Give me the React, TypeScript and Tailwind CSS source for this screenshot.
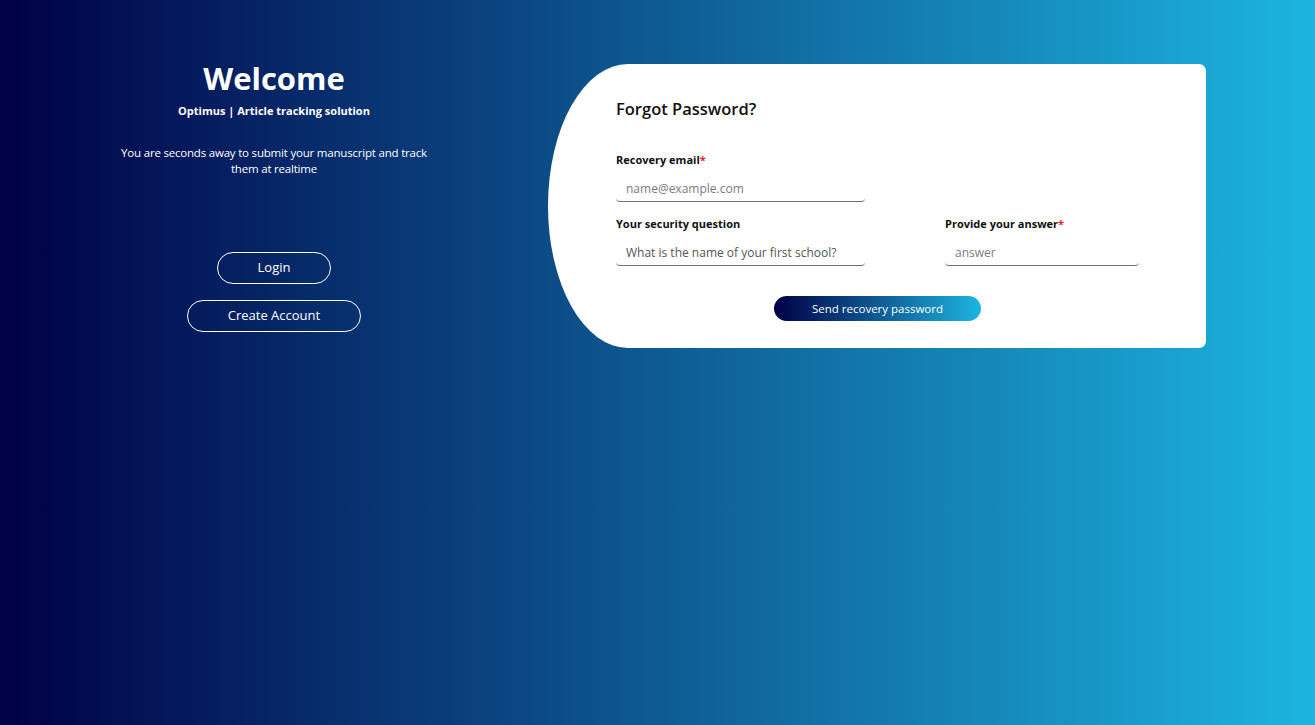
import { useState } from "react";

function Field({
  label,
  required,
  placeholder,
  value,
  width,
}: {
  label: string;
  required?: boolean;
  placeholder?: string;
  value?: string;
  width: string;
}) {
  const [text, setText] = useState(value ?? "");
  return (
    <div className="flex flex-col">
      <label className="text-[11px] font-bold text-[#111] leading-[14px]">
        {label}
        {required && <span className="text-[#e3262f]">*</span>}
      </label>
      <input
        className={`${width} mt-[8px] h-[27px] px-[10px] text-[12px] text-[#555] placeholder:text-[#7b7b7b] outline-none rounded-[4px] border-b-[1.5px] border-[#6f6f6f] bg-white`}
        placeholder={placeholder}
        value={text}
        onChange={(e) => setText(e.target.value)}
      />
    </div>
  );
}

export default function App() {
  return (
    <div
      className="w-screen h-screen flex bg-[linear-gradient(to_right,#000046,#1cb5e0)] text-white"
      style={{ fontFamily: '"Open Sans", "Noto Sans", sans-serif' }}
    >
      {/* left intro */}
      <div className="w-[548px] shrink-0 flex flex-col items-center pt-[58px]">
        <h1 className="text-[31px] font-bold leading-[40px]">Welcome</h1>
        <p className="text-[11px] font-bold mt-[5px]">Optimus | Article tracking solution</p>
        <p className="text-[11.5px] text-center leading-[16px] w-[330px] mt-[25px] tracking-[-0.2px]">
          You are seconds away to submit your manuscript and track them at realtime
        </p>
        <button className="mt-[75px] w-[114px] h-[32px] rounded-full border-[1.5px] border-white text-[13px]">
          Login
        </button>
        <button className="mt-[16px] w-[174px] h-[32px] rounded-full border-[1.5px] border-white text-[13px]">
          Create Account
        </button>
      </div>

      {/* form card */}
      <div className="pt-[64px]">
        <div className="w-[658px] h-[284px] bg-white text-[#111] rounded-tl-[80px_142px] rounded-bl-[80px_142px] rounded-tr-[7px] rounded-br-[7px] pl-[68px] pr-[60px] pt-[34px]">
          <h2 className="text-[16.5px] font-semibold leading-[22px]">Forgot Password?</h2>
          <div className="mt-[33px]">
            <Field label="Recovery email" required placeholder="name@example.com" width="w-[249px]" />
          </div>
          <div className="mt-[15px] flex gap-[80px]">
            <Field label="Your security question" value="What is the name of your first school?" width="w-[249px]" />
            <Field label="Provide your answer" required placeholder="answer" width="w-[194px]" />
          </div>
          <div className="flex mt-[30px] pl-[158px]">
            <button className="w-[207px] h-[25px] rounded-full bg-[linear-gradient(to_right,#000046,#1cb5e0)] text-white text-[11.5px]">
              Send recovery password
            </button>
          </div>
        </div>
      </div>
    </div>
  );
}
